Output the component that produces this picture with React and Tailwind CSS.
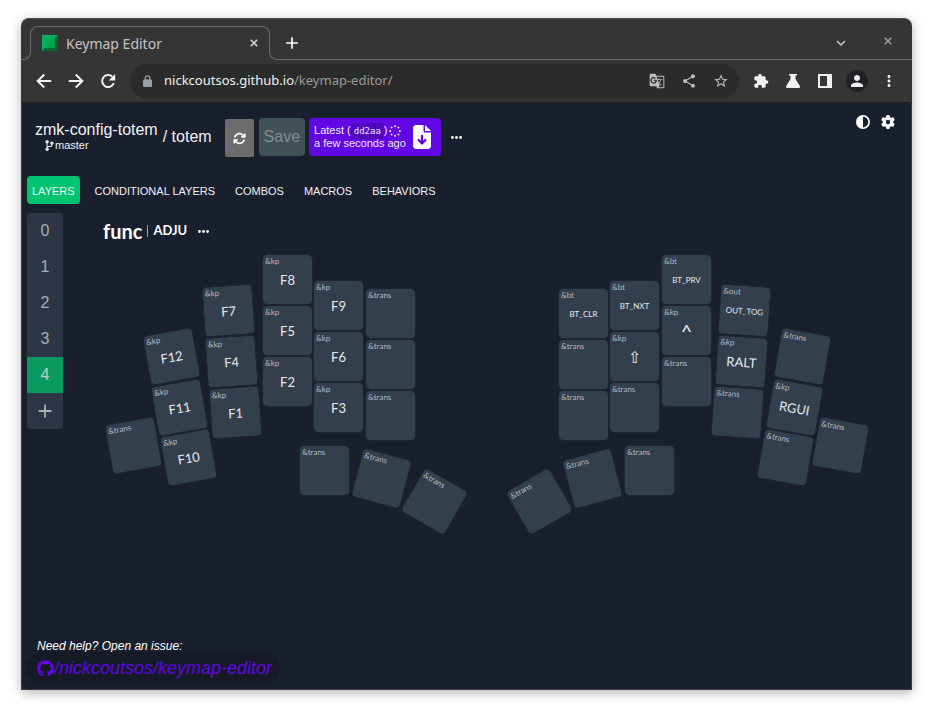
import React from "react";
import {
  MdGTranslate,
  MdShare,
  MdStarBorder,
  MdExtension,
  MdPerson,
  MdMoreVert,
  MdKeyboardArrowDown,
  MdAdd,
} from "react-icons/md";
import { FaCodeBranch, FaGithub } from "react-icons/fa";
import {
  FaArrowsRotate,
  FaFileArrowDown,
  FaEllipsis,
  FaCircleHalfStroke,
  FaGear,
} from "react-icons/fa6";

// Key positions on the board canvas: x/y of the unrotated cap, r in degrees.
const KEYS = [
  { x: 3, y: 166, r: -10, b: "&trans" },
  { x: 41, y: 77, r: -10, b: "&kp", v: "F12" },
  { x: 49, y: 128, r: -10, b: "&kp", v: "F11" },
  { x: 58, y: 178, r: -10, b: "&kp", v: "F10" },
  { x: 98, y: 31, r: -4, b: "&kp", v: "F7" },
  { x: 101, y: 82, r: -4, b: "&kp", v: "F4" },
  { x: 105, y: 133, r: -4, b: "&kp", v: "F1" },
  { x: 157, y: 0, r: 0, b: "&kp", v: "F8" },
  { x: 157, y: 51, r: 0, b: "&kp", v: "F5" },
  { x: 157, y: 102, r: 0, b: "&kp", v: "F2" },
  { x: 208, y: 26, r: 0, b: "&kp", v: "F9" },
  { x: 208, y: 77, r: 0, b: "&kp", v: "F6" },
  { x: 208, y: 128, r: 0, b: "&kp", v: "F3" },
  { x: 260, y: 34, r: 0, b: "&trans" },
  { x: 260, y: 85, r: 0, b: "&trans" },
  { x: 260, y: 136, r: 0, b: "&trans" },
  { x: 194, y: 191, r: 0, b: "&trans" },
  { x: 251, y: 199, r: 15, b: "&trans" },
  { x: 304, y: 222, r: 30, b: "&trans" },
  { x: 453, y: 34, r: 0, b: "&bt", v: "BT_CLR" },
  { x: 453, y: 85, r: 0, b: "&trans" },
  { x: 453, y: 136, r: 0, b: "&trans" },
  { x: 504, y: 26, r: 0, b: "&bt", v: "BT_NXT" },
  { x: 504, y: 77, r: 0, b: "&kp", v: "⇧" },
  { x: 504, y: 128, r: 0, b: "&trans" },
  { x: 556, y: 0, r: 0, b: "&bt", v: "BT_PRV" },
  { x: 556, y: 51, r: 0, b: "&kp", v: "^" },
  { x: 556, y: 102, r: 0, b: "&trans" },
  { x: 614, y: 31, r: 4, b: "&out", v: "OUT_TOG" },
  { x: 611, y: 82, r: 4, b: "&kp", v: "RALT" },
  { x: 607, y: 133, r: 4, b: "&trans" },
  { x: 672, y: 77, r: 10, b: "&trans" },
  { x: 664, y: 128, r: 10, b: "&kp", v: "RGUI" },
  { x: 655, y: 178, r: 10, b: "&trans" },
  { x: 710, y: 166, r: 10, b: "&trans" },
  { x: 409, y: 222, r: -30, b: "&trans" },
  { x: 462, y: 199, r: -15, b: "&trans" },
  { x: 519, y: 191, r: 0, b: "&trans" },
];

function valueSize(v) {
  if (v.length > 4) return "text-[8px]";
  if (v === "^") return "text-xl";
  if (v === "⇧") return "text-base";
  return "text-[13px]";
}

function Key({ x, y, r, b, v }) {
  return (
    <button
      type="button"
      className="absolute flex size-[49px] items-center justify-center rounded-[4px] bg-[#343f4e] text-[#e6e8ea] outline outline-[#1e2533]"
      style={{ left: x, top: y, transform: `rotate(${r}deg)` }}
    >
      <span className="absolute left-[2px] top-0 text-[8px] leading-3 text-[#b4b9c0]">{b}</span>
      {v && <span className={`${valueSize(v)} leading-4`}>{v}</span>}
    </button>
  );
}

function ArrowIcon({ className }) {
  return (
    <svg viewBox="0 0 20 20" className={className} fill="none" stroke="currentColor" strokeWidth="2">
      <path d="M17.200 10H4M10.200 3.500 3.700 10l6.500 6.500" />
    </svg>
  );
}

function ReloadIcon() {
  return (
    <svg viewBox="0 0 20 20" className="size-5">
      <path d="M14.400 5.800A6 6 0 1 0 15.800 12" fill="none" stroke="currentColor" strokeWidth="2" />
      <path d="M17.200 3v6.500h-6.500z" fill="currentColor" />
    </svg>
  );
}

function CrossIcon({ className }) {
  return (
    <svg viewBox="0 0 10 10" className={className} fill="none" stroke="currentColor" strokeWidth="2">
      <path d="m1 1 8 8M9 1 1 9" />
    </svg>
  );
}

function BrowserChrome() {
  return (
    <header className="rounded-t-lg border-t border-[#4b4b4b] bg-[#353535] font-['Noto_Sans',sans-serif]">
      <div className="flex items-end pt-[7px]">
        <div className="-mr-px h-2 w-[10px] rounded-br-lg border-r border-b border-[#6b6b6b]" />
        <div className="mb-2 h-[26px] w-60 rounded-t-lg border border-b-0 border-[#6b6b6b]">
          <div className="flex h-8 items-center pr-[11px] pl-[11px]">
            <svg viewBox="0 0 16 16" className="size-4 shrink-0">
              <rect width="16" height="16" fill="#067a3c" />
              <path d="M0 0h16l-2 3H3v10l-3 3z" fill="#0bb062" />
              <path d="M16 0v16H0l3-3h10V3z" fill="#04652f" />
              <rect x="3" y="3" width="10" height="10" rx="1" fill="#06ab55" />
              <path d="M13 4v5q-1 4-5 4H4z" fill="#079f4d" />
            </svg>
            <span className="ml-2 flex-1 text-[14px] text-[#c4c4c4]">Keymap Editor</span>
            <button type="button" aria-label="Close tab" className="text-[#d0d0d0]">
              <CrossIcon className="size-2" />
            </button>
          </div>
        </div>
        <div className="-ml-px h-2 w-[9px] rounded-bl-lg border-b border-l border-[#6b6b6b]" />
        <div className="flex h-[34px] flex-1 items-center border-b border-[#6b6b6b] pr-5 pl-1">
          <button type="button" aria-label="New tab" className="text-white">
            <MdAdd size={20} />
          </button>
          <button type="button" aria-label="Search tabs" className="mr-[34px] ml-auto text-[#c8c8c8]">
            <MdKeyboardArrowDown size={18} />
          </button>
          <button type="button" aria-label="Close window" className="mb-1 text-[#9a9a9a]">
            <CrossIcon className="size-2" />
          </button>
        </div>
      </div>
      <div className="flex h-[43px] items-center border-b border-[#222] pr-[14px] pl-[13px] text-[#f1f1f1]">
        <nav className="flex items-center gap-3">
          <button type="button" aria-label="Back"><ArrowIcon className="size-5" /></button>
          <button type="button" aria-label="Forward"><ArrowIcon className="size-5 rotate-180" /></button>
          <button type="button" aria-label="Reload"><ReloadIcon /></button>
        </nav>
        <div className="ml-3 flex h-[34px] flex-1 items-center rounded-full bg-[#2b2b2b] pr-[10px] pl-[13px] text-[#bdbdbd]">
          <svg viewBox="0 0 9 12" className="h-3 w-[9px] shrink-0 text-[#9aa0a6]">
            <rect y="4.500" width="9" height="7.500" rx="1" fill="currentColor" />
            <path d="M2.200 5V3.200a2.300 2.300 0 0 1 4.600 0V5" fill="none" stroke="currentColor" strokeWidth="1.200" />
          </svg>
          <p className="ml-3 flex-1 text-[13px] text-[#9a9a9a]">
            <span className="text-[#f1f1f1]">nickcoutsos.github.io</span>/keymap-editor/
          </p>
          <div className="flex items-center gap-4">
            <button type="button" aria-label="Translate"><MdGTranslate size={16} /></button>
            <button type="button" aria-label="Share"><MdShare size={16} /></button>
            <button type="button" aria-label="Bookmark"><MdStarBorder size={16} /></button>
          </div>
        </div>
        <div className="ml-[14px] flex items-center">
          <button type="button" aria-label="Extensions"><MdExtension size={16} /></button>
          <button type="button" aria-label="Experiments" className="ml-4">
            <svg viewBox="0 0 16 16" className="size-4" fill="currentColor">
              <path d="M4 1h8v1.500h-1.500V6l4.300 7q.8 2-1.300 2h-11q-2.100 0-1.300-2L5.500 6V2.500H4z" />
            </svg>
          </button>
          <button type="button" aria-label="Side panel" className="ml-4">
            <svg viewBox="0 0 16 16" className="size-4" fill="currentColor">
              <path fillRule="evenodd" d="M1 1h14v14H1zM3 3v10h7V3z" />
            </svg>
          </button>
          <button
            type="button"
            aria-label="Profile"
            className="ml-[13px] flex size-[22px] items-center justify-center rounded-full bg-[#202124]"
          >
            <MdPerson size={18} />
          </button>
          <button type="button" aria-label="Browser menu" className="ml-3"><MdMoreVert size={18} /></button>
        </div>
      </div>
    </header>
  );
}

function DotSpinner() {
  return (
    <svg viewBox="0 0 12 12" className="ml-px size-3" fill="currentColor">
      <circle cx="6" cy="1.200" r="1" />
      <circle cx="9.400" cy="2.600" r="1" />
      <circle cx="10.800" cy="6" r="1" />
      <circle cx="9.400" cy="9.400" r="1" />
      <circle cx="6" cy="10.800" r="1" />
      <circle cx="2.600" cy="9.400" r="1" />
      <circle cx="1.200" cy="6" r="1" />
      <circle cx="2.600" cy="2.600" r="1" />
    </svg>
  );
}

function ProjectBar() {
  return (
    <div className="flex items-start pt-[15px] pr-4 pl-[13px]">
      <div className="flex h-[38px] items-center text-base text-[#f0f1f3]">
        <div>
          <p className="leading-4">zmk-config-totem</p>
          <p className="flex items-center pl-[9px] text-[11px] leading-[14px]">
            <FaCodeBranch size={11} />
            master
          </p>
        </div>
        <p className="pl-[5px]">/ totem</p>
      </div>
      <button
        type="button"
        aria-label="Refresh"
        className="mt-px ml-[13px] flex h-[38px] w-[29px] items-center justify-center rounded-[2px] bg-[#6c6c6c] text-white"
      >
        <FaArrowsRotate size={13} />
      </button>
      <button
        type="button"
        disabled
        className="ml-[5px] h-[38px] rounded-[4px] bg-[#405256] px-[5px] text-base text-[#848b90]"
      >
        Save
      </button>
      <button
        type="button"
        className="ml-1 flex h-[38px] items-center rounded-[4px] bg-[#6206e4] pr-[10px] pl-[5px] text-left text-[11px] leading-[13px] text-[#efe8fb]"
      >
        <span>
          <span className="flex items-center">
            Latest (
            <code className="-my-1 rounded-[3px] bg-[#5209bd] px-[3px] font-['DejaVu_Sans_Mono',monospace] text-[9px] leading-4">
              dd2aa
            </code>
            )
            <DotSpinner />
          </span>
          <span className="block">a few seconds ago</span>
        </span>
        <FaFileArrowDown className="ml-[7px] h-6 w-[18px] text-white" />
      </button>
      <button type="button" aria-label="More" className="ml-[9px] flex h-[38px] items-center text-white">
        <FaEllipsis size={13} />
      </button>
      <div className="-mt-[3px] ml-auto flex items-center gap-[11px] text-white">
        <button type="button" aria-label="Theme"><FaCircleHalfStroke size={14} /></button>
        <button type="button" aria-label="Settings"><FaGear size={14} /></button>
      </div>
    </div>
  );
}

const TABS = ["LAYERS", "CONDITIONAL LAYERS", "COMBOS", "MACROS", "BEHAVIORS"];

function Tabs() {
  return (
    <nav className="mt-[19px] flex gap-[10px] pl-[5px] text-[11px] text-[#f0f1f3]">
      {TABS.map((t, i) => (
        <button
          key={t}
          type="button"
          className={i === 0 ? "h-7 rounded-[4px] bg-[#00c46f] px-[5px] pt-[2px]" : "h-7 px-[5px] pt-[2px]"}
        >
          {t}
        </button>
      ))}
    </nav>
  );
}

function LayerRail() {
  return (
    <ul className="w-9 shrink-0 overflow-hidden rounded-[4px] bg-[#2d3647] text-base text-[#a9aeb5]">
      {[0, 1, 2, 3, 4].map((n) => (
        <li key={n}>
          <button type="button" className={n === 4 ? "h-9 w-full bg-[#0a9a5f] text-[#b9cfc6]" : "h-9 w-full"}>
            {n}
          </button>
        </li>
      ))}
      <li>
        <button type="button" aria-label="Add layer" className="flex h-9 w-full items-center justify-center">
          <MdAdd size={22} />
        </button>
      </li>
    </ul>
  );
}

export default function App() {
  return (
    <div className="flex min-h-screen flex-col bg-white px-[21px] pt-[18px] pb-6">
      <div className="flex flex-1 flex-col rounded-t-lg shadow-[0_3px_12px_rgba(0,0,0,0.3)]">
        <BrowserChrome />
        <main className="flex flex-1 flex-col border border-t-0 border-[#3a3d42] bg-[#191f2c] font-['Liberation_Sans',Arial,sans-serif]">
          <ProjectBar />
          <Tabs />
          <div className="mt-[9px] flex items-start pl-[5px]">
            <LayerRail />
            <section className="ml-10 flex-1 font-[Lato,sans-serif]">
              <div className="flex h-9 items-center text-white">
                <h1 className="text-xl font-bold">func</h1>
                <span className="mx-[5px] h-3 w-px bg-[#9aa0a8]" />
                <h2 className="text-[13px] font-bold">ADJU</h2>
                <button type="button" aria-label="Layer menu" className="ml-[10px]">
                  <FaEllipsis size={13} />
                </button>
              </div>
              <div className="relative mt-[6px] ml-[3px] h-[280px]">
                {KEYS.map((k) => (
                  <Key key={`${k.x}-${k.y}`} {...k} />
                ))}
              </div>
            </section>
          </div>
          <footer className="mt-auto pb-[5px] pl-1 italic">
            <p className="pl-[11px] text-xs leading-3 text-white">Need help? Open an issue:</p>
            <a
              href="https://github.com/nickcoutsos/keymap-editor"
              className="inline-flex h-8 items-center rounded-full bg-[#151a26] pr-2 pl-[11px] text-lg text-[#6206e4]"
            >
              <FaGithub size={17} />
              /nickcoutsos/keymap-editor
            </a>
          </footer>
        </main>
      </div>
    </div>
  );
}
